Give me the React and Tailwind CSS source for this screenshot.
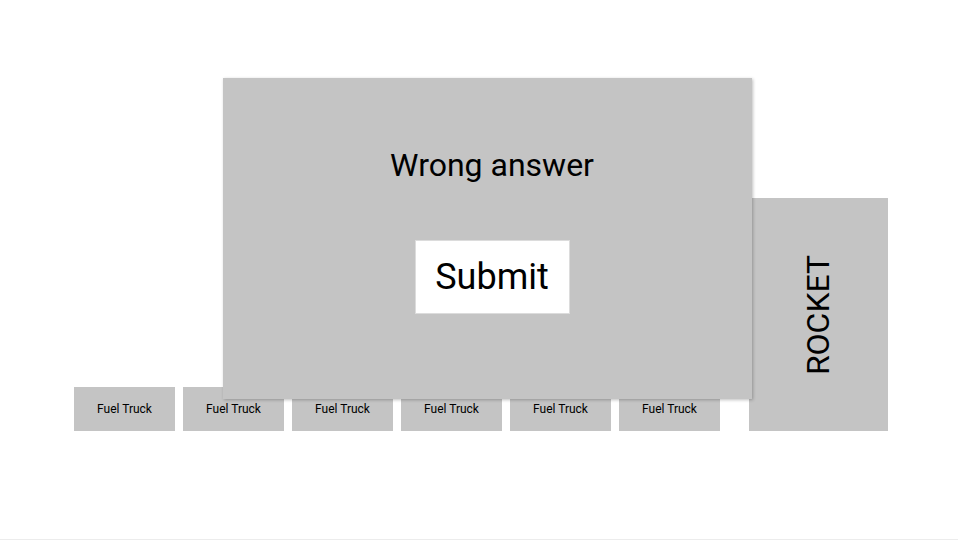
export default function App() {
  const trucks = [0, 1, 2, 3, 4, 5];
  return (
    <div
      className="relative h-[540px] w-full border-b border-[#ececec] bg-white text-black"
      style={{ fontFamily: "Roboto, 'Liberation Sans', sans-serif" }}
    >
      <div className="flex items-end pl-[74px] pt-[198px]">
        <div className="flex gap-2">
          {trucks.map((i) => (
            <div
              key={i}
              className="flex h-[44px] w-[101px] items-center justify-center bg-[#c4c4c4] text-[12px]"
            >
              Fuel Truck
            </div>
          ))}
        </div>
        <div className="ml-[29px] flex h-[233px] w-[139px] items-center justify-center bg-[#c4c4c4]">
          <span className="-rotate-90 whitespace-nowrap text-[32px] leading-none">ROCKET</span>
        </div>
      </div>

      <div className="absolute left-[223px] top-[78px] flex h-[321px] w-[529px] flex-col items-center bg-[#c4c4c4] pl-[9px] shadow-[1px_1px_3px_rgba(0,0,0,0.25)]">
        <div className="mt-[69px] text-[32px] leading-[36px]">Wrong answer</div>
        <div className="mt-[57px] flex h-[74px] w-[155px] items-center justify-center border border-[#dcdcdc] bg-white text-[36px]">
          Submit
        </div>
      </div>
    </div>
  );
}
